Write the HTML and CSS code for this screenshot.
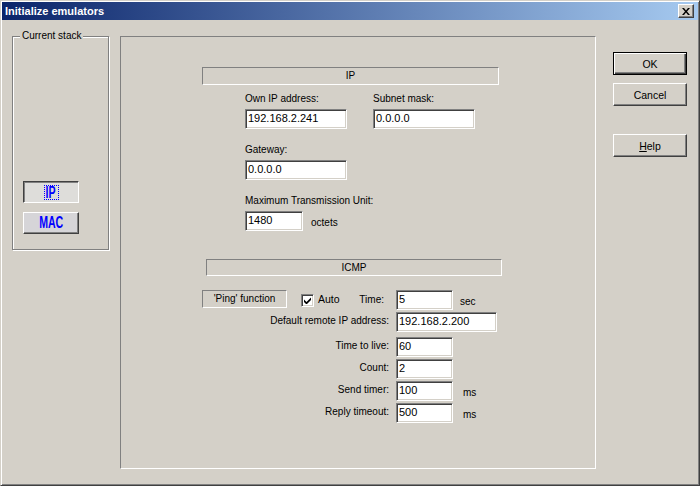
FILE: index.html
```html
<!DOCTYPE html>
<html>
<head>
<meta charset="utf-8">
<title>Initialize emulators</title>
<link rel="stylesheet" href="styles.css">
</head>
<body>
<div class="window">
  <div class="titlebar">
    <span class="title">Initialize emulators</span>
    <span class="close"><svg width="8" height="7" viewBox="0 0 8 7"><path d="M0 0h2l2 2.4 2-2.4h2l-3 3.5 3 3.5h-2l-2-2.4-2 2.4h-2l3-3.5z" fill="#000"/></svg></span>
  </div>
  <div class="client">
    <fieldset class="stack">
      <legend>Current stack</legend>
      <button class="tbtn pressed"><span class="focus"><span class="cond">IP</span></span></button>
      <button class="tbtn"><span class="cond">MAC</span></button>
    </fieldset>

    <div class="panel">
      <div class="sechead sh-ip">IP</div>
      <div class="ipgrid">
        <div class="field"><label>Own IP address:</label><div class="edit w102">192.168.2.241</div></div>
        <div class="field"><label>Subnet mask:</label><div class="edit w102">0.0.0.0</div></div>
        <div class="field"><label>Gateway:</label><div class="edit w102">0.0.0.0</div></div>
        <div class="field"></div>
        <div class="field span2"><label>Maximum Transmission Unit:</label>
          <div class="inline"><div class="edit w58">1480</div><span class="unit octets">octets</span></div>
        </div>
      </div>

      <div class="sechead sh-icmp">ICMP</div>

      <div class="pingrow">
        <div class="pingleft">
          <div class="pingbox">'Ping' function</div>
          <span class="check"><svg width="7" height="7" viewBox="0 0 7 7"><path d="M0 2.5 2.5 5 7 0.5V3L2.5 7.5 0 5z" fill="#000"/></svg></span>
          <span class="autolbl">Auto</span>
          <span class="timelbl">Time:</span>
        </div>
        <div class="edit w57">5</div>
        <span class="unit sec">sec</span>
      </div>

      <div class="rows">
        <div class="irow"><label>Default remote IP address:</label><div class="edit w101">192.168.2.200</div></div>
        <div class="irow r-ttl"><label>Time to live:</label><div class="edit w57">60</div></div>
        <div class="irow"><label>Count:</label><div class="edit w57">2</div></div>
        <div class="irow"><label>Send timer:</label><div class="edit w57">100</div><span class="unit ms">ms</span></div>
        <div class="irow"><label>Reply timeout:</label><div class="edit w57">500</div><span class="unit ms">ms</span></div>
      </div>
    </div>

    <div class="actions">
      <button class="btn default">OK</button>
      <button class="btn">Cancel</button>
      <button class="btn help"><u>H</u>elp</button>
    </div>
  </div>
</div>
</body>
</html>
```

FILE: styles.css
```css
* { box-sizing: border-box; }
html, body { margin: 0; padding: 0; }
body {
  width: 700px;
  height: 486px;
  overflow: hidden;
  background: #D4D0C8;
  font-family: "Liberation Sans", Arial, sans-serif;
  font-size: 10px;
  color: #000;
}

.window {
  width: 700px;
  height: 486px;
  background: #D4D0C8;
  border: 1px solid;
  border-color: #D4D0C8 #404040 #404040 #D4D0C8;
  box-shadow: inset 1px 1px 0 #fff, inset -1px -1px 0 #808080;
  padding: 1px;
  display: flex;
  flex-direction: column;
}

.titlebar {
  height: 18px;
  flex: none;
  display: flex;
  align-items: center;
  padding-left: 3px;
  background: linear-gradient(to right, #0A246A, #A6CAF0);
  color: #fff;
  font-weight: bold;
  font-size: 11px;
}
.close {
  margin-left: auto;
  margin-right: 4px;
  width: 16px;
  height: 14px;
  background: #D4D0C8;
  border: 1px solid;
  border-color: #fff #404040 #404040 #fff;
  box-shadow: inset -1px -1px 0 #808080;
  display: flex;
  align-items: center;
  justify-content: center;
}
.close svg { display: block; }

.client {
  flex: 1;
  display: flex;
  align-items: flex-start;
  padding-left: 10px;
}

/* Current stack group */
.stack {
  margin: 10px 0 0 0;
  width: 97px;
  height: 220px;
  padding: 0 0 15px 10px;
  border: 1px solid #808080;
  box-shadow: inset 1px 1px 0 #fff, 1px 1px 0 #fff;
  display: flex;
  flex-direction: column;
  justify-content: flex-end;
  gap: 9px;
  min-width: 0;
}
.stack legend {
  margin-left: -3px;
  padding: 0 2px;
  line-height: 12px;
  font-size: 10px;
  background: #D4D0C8;
}
.tbtn {
  width: 56px;
  height: 22px;
  padding: 0;
  margin: 0;
  font-family: "Liberation Sans", Arial, sans-serif;
  font-weight: bold;
  font-size: 16px;
  line-height: 14px;
  color: #0000FF;
  background: #D6D5D8;
  border: 1px solid;
  border-color: #fff #404040 #404040 #fff;
  box-shadow: inset -1px -1px 0 #808080;
  display: flex;
  align-items: center;
  justify-content: center;
}
.tbtn.pressed {
  background: #DEDDDA;
  border-color: #404040 #fff #fff #404040;
  box-shadow: inset 1px 1px 0 #808080;
}
.cond {
  display: inline-block;
  transform: scaleX(0.66);
}
.focus {
  display: inline-flex;
  justify-content: center;
  align-items: center;
  width: 15px;
  height: 15px;
  line-height: 13px;
  border: 1px dotted #0000FF;
}

/* Main panel */
.panel {
  margin: 16px 0 0 11px;
  width: 476px;
  height: 433px;
  border: 1px solid;
  border-color: #808080 #fff #fff #808080;
  padding-top: 30px;
  display: flex;
  flex-direction: column;
  align-items: flex-start;
}
.sechead {
  height: 18px;
  border: 1px solid;
  border-color: #808080 #fff #fff #808080;
  text-align: center;
  line-height: 16px;
  font-size: 10px;
}
.sh-ip { margin-left: 81px; width: 297px; }
.sh-icmp { margin: 28px 0 0 85px; width: 296px; height: 17px; line-height: 15px; }

.ipgrid {
  margin: 7px 0 0 124px;
  display: grid;
  grid-template-columns: 102px 102px;
  column-gap: 26px;
  row-gap: 14px;
}
.field { display: flex; flex-direction: column; align-items: flex-start; }
.field label { line-height: 13px; margin-bottom: 4px; white-space: nowrap; }
.span2 { grid-column: 1 / span 2; }
.inline { display: flex; align-items: flex-start; }

.edit {
  height: 20px;
  background: #fff;
  border: 1px solid;
  border-color: #808080 #fff #fff #808080;
  box-shadow: inset 1px 1px 0 #404040, inset -1px -1px 0 #D4D0C8;
  padding: 1px 2px 0 2px;
  line-height: 14px;
  font-size: 11px;
  white-space: nowrap;
}
.w102 { width: 102px; }
.w101 { width: 101px; }
.w58 { width: 58px; }
.w57 { width: 57px; }

.unit { padding-top: 5px; line-height: 13px; }
.octets { margin-left: 8px; }
.sec { margin-left: 7px; }
.ms { margin-left: 10px; }

.pingrow {
  margin: 14px 0 0 81px;
  display: flex;
  align-items: flex-start;
  height: 20px;
}
.pingleft {
  width: 182px;
  height: 20px;
  display: flex;
  align-items: flex-start;
}
.pingbox {
  width: 85px;
  height: 18px;
  border: 1px solid;
  border-color: #808080 #fff #fff #808080;
  text-align: center;
  line-height: 16px;
}
.check {
  margin: 4px 0 0 14px;
  width: 13px;
  height: 13px;
  background: #fff;
  border: 1px solid;
  border-color: #808080 #fff #fff #808080;
  box-shadow: inset 1px 1px 0 #404040, inset -1px -1px 0 #D4D0C8;
  display: flex;
  align-items: center;
  justify-content: center;
}
.check svg { display: block; }
.autolbl { margin-left: 4px; padding-top: 3px; line-height: 13px; font-size: 10.5px; }
.timelbl { margin-left: auto; padding-top: 3px; line-height: 13px; }
.pingrow > .edit { margin-left: 12px; }

.rows {
  margin-top: 2px;
  display: flex;
  flex-direction: column;
  gap: 2px;
}
.irow { display: flex; align-items: flex-start; height: 20px; }
.irow label {
  width: 268px;
  margin-right: 7px;
  text-align: right;
  padding-top: 2px;
  line-height: 13px;
  white-space: nowrap;
}
.r-ttl { margin-top: 3px; }

/* Dialog buttons */
.actions {
  margin: 32px 0 0 17px;
  display: flex;
  flex-direction: column;
  gap: 8px;
}
.btn {
  width: 74px;
  height: 23px;
  margin: 0;
  padding: 0;
  font-family: "Liberation Sans", Arial, sans-serif;
  font-size: 10.5px;
  color: #000;
  background: #D4D0C8;
  border: 1px solid;
  border-color: #fff #404040 #404040 #fff;
  box-shadow: inset -1px -1px 0 #808080;
}
.btn.default {
  border-color: #000;
  box-shadow: inset 1px 1px 0 #fff, inset -1px -1px 0 #404040, inset -2px -2px 0 #808080;
}
.btn.help { margin-top: 20px; }
```
